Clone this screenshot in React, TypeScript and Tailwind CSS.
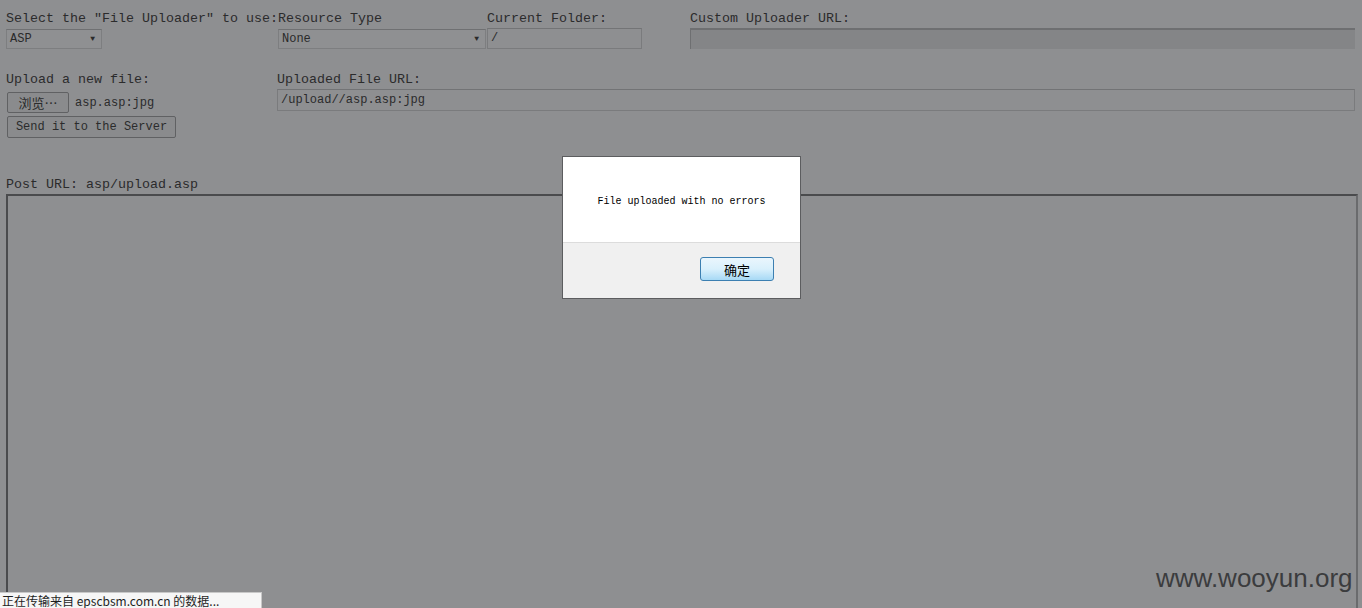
const mono = "font-['Liberation_Mono','Noto_Sans_CJK_SC',monospace]";

function Select({ value, width }: { value: string; width: string }) {
  return (
    <div
      className={`${width} h-[20px] flex items-center justify-between border border-[#7d7e80] border-t-[#6f7072] bg-[#8f9092] pl-[3px] pr-[6px] text-[12px] text-[#2a2a2a]`}
    >
      <span>{value}</span>
      <span className="text-[8px] leading-none">▼</span>
    </div>
  );
}

export default function App() {
  return (
    <div className={`relative h-[608px] w-[1362px] overflow-hidden bg-[#8e8f91] text-[#2b2b2c] ${mono}`}>
      <div className="pl-[6px] pr-[7px] pt-[10px] text-[13.33px] leading-[18px]">
        {/* first row */}
        <div className="flex">
          <div className="w-[272px] shrink-0">
            <div>Select the "File Uploader" to use:</div>
            <div className="mt-[1px]">
              <Select value="ASP" width="w-[96px]" />
            </div>
          </div>
          <div className="w-[209px] shrink-0">
            <div>Resource Type</div>
            <div className="mt-[1px]">
              <Select value="None" width="w-[208px]" />
            </div>
          </div>
          <div className="w-[203px] shrink-0">
            <div>Current Folder:</div>
            <div className="h-[21px] w-[155px] border border-[#7a7b7d] border-t-[#737476] pl-[3px] text-[12px] leading-[19px]">
              /
            </div>
          </div>
          <div className="flex-1">
            <div>Custom Uploader URL:</div>
            <div className="h-[21px] border-t-2 border-l border-[#6e6f71] bg-[#848587]" />
          </div>
        </div>

        {/* second row */}
        <div className="mt-[22px] flex">
          <div className="w-[271px] shrink-0">
            <div>Upload a new file:</div>
            <div className="mt-[3px] flex items-center">
              <button className="ml-[1px] h-[21px] w-[62px] rounded-[2px] border border-[#606163] bg-[#8a8b8d] text-[13px] font-['Noto_Sans_CJK_SC',sans-serif] leading-none">
                浏览…
              </button>
              <span className="ml-[6px] text-[12px]">asp.asp:jpg</span>
            </div>
            <button className="ml-[1px] mt-[3px] h-[22px] w-[169px] rounded-[2px] border border-[#606163] bg-[#8a8b8d] text-[12px] leading-none">
              Send it to the Server
            </button>
          </div>
          <div className="flex-1">
            <div>Uploaded File URL:</div>
            <div className="h-[22px] border border-[#7a7b7d] border-t-[#727375] pl-[3px] text-[12px] leading-[20px]">
              /upload//asp.asp:jpg
            </div>
          </div>
        </div>

        {/* post url */}
        <div className="mt-[38px]">Post URL: asp/upload.asp</div>
        <div className="-mr-[3px] h-[420px] border-t-2 border-l-2 border-r-2 border-[#4a4b4d] border-r-[#6a6b6d]" />
      </div>

      {/* alert dialog */}
      <div className="absolute left-[562px] top-[156px] flex h-[143px] w-[239px] flex-col border border-[#5c5d5f] bg-white">
        <div className="flex h-[86px] items-center justify-center border-b border-[#dcdcdc] pt-[3px] text-[10px] text-black">
          File uploaded with no errors
        </div>
        <div className="flex flex-1 items-start justify-end bg-[#f0f0f0] pr-[26px] pt-[14px]">
          <button className="h-[24px] w-[74px] rounded-[3px] border border-[#3c7fb1] bg-gradient-to-b from-[#eaf6fd] via-[#d9f0fc] to-[#a7d9f5] text-[13px] leading-none text-black font-['Noto_Sans_CJK_SC',sans-serif]">
            确定
          </button>
        </div>
      </div>

      {/* watermark */}
      <div className="absolute left-[1156px] top-[562px] text-[26px] leading-[32px] text-[#3b3c3e] font-['Liberation_Sans',sans-serif]">
        www.wooyun.org
      </div>

      {/* status bar */}
      <div className="absolute left-0 top-[592px] h-[16px] w-[262px] border-r border-t border-[#c8c8c8] bg-[#f6f6f6] pl-[2px] text-[12px] leading-[15px] text-[#1e1e1e] font-['Noto_Sans_CJK_SC',sans-serif]">
        正在传输来自 epscbsm.com.cn 的数据...
      </div>
    </div>
  );
}
